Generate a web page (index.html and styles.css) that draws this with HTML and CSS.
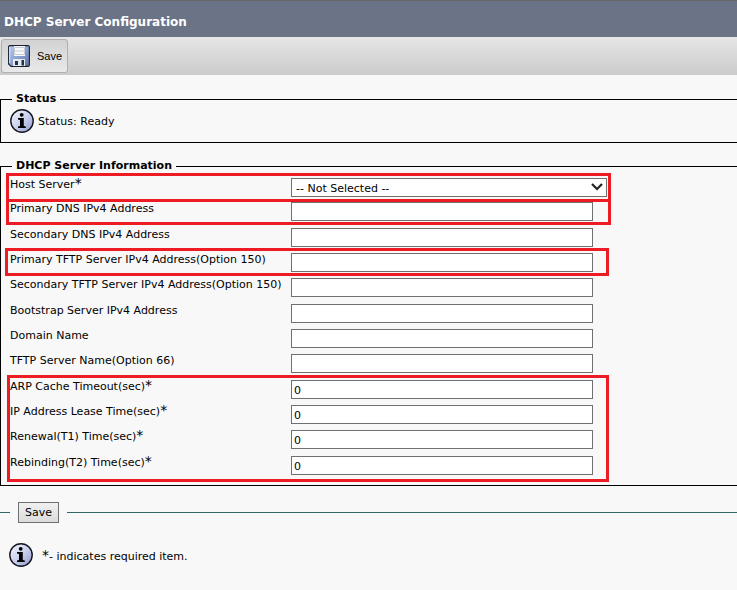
FILE: index.html
```html
<!DOCTYPE html>
<html lang="en">
<head>
  <meta charset="UTF-8">
  <meta name="viewport" content="width=device-width, initial-scale=1.0">
  <title>DHCP Server Configuration</title>
  <link rel="stylesheet" href="styles.css">
</head>
<body>
  <svg class="defs" width="0" height="0" aria-hidden="true">
    <defs>
      <linearGradient id="infoFill" x1="0" y1="0" x2="1" y2="1">
        <stop offset="0" stop-color="#f4f6fd"/>
        <stop offset="0.5" stop-color="#cbd2ee"/>
        <stop offset="1" stop-color="#8f98cc"/>
      </linearGradient>
      <linearGradient id="diskFill" x1="0" y1="0" x2="1" y2="1">
        <stop offset="0" stop-color="#b9cdec"/>
        <stop offset="0.5" stop-color="#8ba3d2"/>
        <stop offset="1" stop-color="#5b6c9c"/>
      </linearGradient>
      <symbol id="info" viewBox="0 0 24 24">
        <circle cx="12" cy="12" r="11.2" fill="url(#infoFill)" stroke="#15151f" stroke-width="1.4"/>
        <circle cx="11.7" cy="5.8" r="1.9" fill="#000"/>
        <path d="M8 9H13.8V17L15.8 17.5V19H8V17.5L10 17V11L8 10.5Z" fill="#000"/>
      </symbol>
    </defs>
  </svg>

  <header class="title-bar">
    <h1>DHCP Server Configuration</h1>
  </header>

  <div class="toolbar">
    <button type="submit" form="dhcpForm" class="tool-button">
      <svg width="22" height="22" viewBox="0 0 22 22" aria-hidden="true">
        <path d="M2 .6H20Q21.4 .6 21.4 2V20Q21.4 21.4 20 21.4H3L.6 19V2Q.6 .6 2 .6Z" fill="url(#diskFill)" stroke="#1c2233" stroke-width="1.1"/>
        <path d="M1.7 2V18" stroke="#dbe6f7"/>
        <rect x="6" y="1" width="11" height="10" fill="#f7f8fa"/>
        <path d="M6.5 2.5H16.5V9.5H6.5ZM6.5 6H16.5" fill="none" stroke="#c9ccd2"/>
        <rect x="5" y="14" width="12" height="7" fill="#e6e9ee"/>
        <path d="M7 16H10V20H7Z" fill="#1d3347"/>
        <path d="M13.5 15H16V20.5H13.5Z" fill="#1d3347"/>
      </svg>
      <span>Save</span>
    </button>
  </div>

  <form id="dhcpForm">
    <fieldset class="status">
      <legend>Status</legend>
      <div class="message">
        <svg width="24" height="24" aria-hidden="true"><use href="#info"/></svg>
        <span>Status: Ready</span>
      </div>
    </fieldset>

    <fieldset class="server-info">
      <legend>DHCP Server Information</legend>
      <div class="group mark mark-host">
        <div class="row host">
          <label for="hostServer">Host Server<span class="required">*</span></label>
          <div class="select-wrap">
            <select id="hostServer">
              <option>-- Not Selected --</option>
            </select>
            <svg class="chevron" width="12" height="8" viewBox="0 0 12 8" aria-hidden="true">
              <path d="M1 1L6 6L11 1" fill="none" stroke="#222" stroke-width="2.2"/>
            </svg>
          </div>
        </div>
      </div>
      <div class="group mark mark-dns">
        <div class="row tall">
          <label for="primaryDns">Primary DNS IPv4 Address</label>
          <input type="text" id="primaryDns">
        </div>
      </div>
      <div class="row">
        <label for="secondaryDns">Secondary DNS IPv4 Address</label>
        <input type="text" id="secondaryDns">
      </div>
      <div class="group mark mark-tftp">
        <div class="row">
          <label for="primaryTftp">Primary TFTP Server IPv4 Address(Option 150)</label>
          <input type="text" id="primaryTftp">
        </div>
      </div>
      <div class="row tall">
        <label for="secondaryTftp">Secondary TFTP Server IPv4 Address(Option 150)</label>
        <input type="text" id="secondaryTftp">
      </div>
      <div class="row">
        <label for="bootstrap">Bootstrap Server IPv4 Address</label>
        <input type="text" id="bootstrap">
      </div>
      <div class="row">
        <label for="domainName">Domain Name</label>
        <input type="text" id="domainName">
      </div>
      <div class="row tall">
        <label for="tftpName">TFTP Server Name(Option 66)</label>
        <input type="text" id="tftpName">
      </div>
      <div class="group mark mark-times">
        <div class="row">
          <label for="arpTimeout">ARP Cache Timeout(sec)<span class="required">*</span></label>
          <input type="text" id="arpTimeout" value="0">
        </div>
        <div class="row">
          <label for="leaseTime">IP Address Lease Time(sec)<span class="required">*</span></label>
          <input type="text" id="leaseTime" value="0">
        </div>
        <div class="row tall">
          <label for="renewalTime">Renewal(T1) Time(sec)<span class="required">*</span></label>
          <input type="text" id="renewalTime" value="0">
        </div>
        <div class="row">
          <label for="rebindingTime">Rebinding(T2) Time(sec)<span class="required">*</span></label>
          <input type="text" id="rebindingTime" value="0">
        </div>
      </div>
    </fieldset>

    <div class="actions">
      <button type="submit" class="save">Save</button>
    </div>
  </form>

  <div class="message note">
    <svg width="24" height="24" aria-hidden="true"><use href="#info"/></svg>
    <span><span class="required">*</span>- indicates required item.</span>
  </div>
</body>
</html>
```
FILE: styles.css
```css
*,
*::before,
*::after {
  box-sizing: border-box;
}

body {
  margin: 0;
  background: #f8f8f8;
  color: #000;
  font-family: Verdana, "DejaVu Sans", sans-serif;
  font-size: 11px;
  line-height: 14px;
}

input,
select,
button {
  font-family: inherit;
  font-size: 11px;
  color: #000;
  margin: 0;
}

.defs {
  position: absolute;
}

/* header */
.title-bar {
  padding: 13px 4px 7px;
  background: #6b7486;
  border-top: 1px solid #666;
}

.title-bar h1 {
  margin: 0;
  color: #fff;
  font-size: 12px;
  line-height: 16px;
}

.toolbar {
  padding: 2px 1px;
  background: linear-gradient(#e6e6e6, #cbcbcb);
}

.tool-button {
  display: flex;
  align-items: center;
  gap: 7px;
  height: 34px;
  padding: 0 5px 0 6px;
  background: linear-gradient(#d2d2d2, #e9e9e9);
  border: 1px solid #b0b0b0;
  border-radius: 3px;
  font-family: Tahoma, "Liberation Sans", sans-serif;
}

/* sections */
fieldset {
  min-width: 0;
  margin: 0;
  padding: 0 0 0 9px;
  border: 1px solid #000;
  border-right: 0;
}

legend {
  margin-left: 2px;
  padding: 0 4px;
  font-weight: bold;
}

.status {
  margin-top: 17px;
  padding-bottom: 9px;
}

.message {
  display: flex;
  align-items: center;
  gap: 4px;
}

.message > span {
  padding-top: 1px;
}

.status .message {
  margin-top: 3px;
}

.server-info {
  margin-top: 16px;
  padding-bottom: 5px;
}

.server-info legend {
  margin-bottom: 4px;
}

.row {
  display: flex;
  align-items: flex-start;
  height: 25px;
}

.row.tall {
  height: 26px;
}

.row.host {
  height: 24px;
}

.row label {
  flex: 0 0 281px;
  padding-top: 1px;
  white-space: nowrap;
}

.row input,
.row select {
  width: 302px;
  height: 19px;
  margin-top: 1px;
  padding: 1px 2px 0;
  background: #fff;
  border: 1px solid #707070;
  border-radius: 0;
}

.row select {
  display: block;
  width: 316px;
  padding: 1px 4px 0;
  appearance: none;
}

.select-wrap {
  position: relative;
}

.chevron {
  position: absolute;
  top: 6px;
  right: 4px;
  pointer-events: none;
}

.required {
  font-size: 14px;
  line-height: 1px;
}

/* red outlines round the settings to fill in */
.group {
  position: relative;
}

.mark::after {
  content: "";
  position: absolute;
  top: -4px;
  left: -4px;
  width: 605px;
  bottom: -1px;
  border: 3px solid #ed1c24;
  pointer-events: none;
}

.mark-dns::after {
  top: -2px;
  bottom: 2px;
}

.mark-tftp::after {
  left: -5px;
  width: 604px;
  bottom: 1px;
}

.mark-times::after {
  left: -3px;
  width: 602px;
  bottom: -2px;
}

/* save line */
.actions {
  display: flex;
  align-items: center;
  gap: 8px;
  margin-top: 16px;
}

.actions::before,
.actions::after {
  content: "";
  width: 10px;
  height: 1px;
  background: #336666;
}

.actions::after {
  flex: 1;
}

.save {
  height: 21px;
  padding: 0 6px;
  background: linear-gradient(#f0f0f0, #dcdcdc);
  border: 1px solid #707070;
  border-radius: 0;
}

.note {
  margin: 20px 9px;
  gap: 9px;
}

.note > span {
  padding-top: 4px;
}
```
